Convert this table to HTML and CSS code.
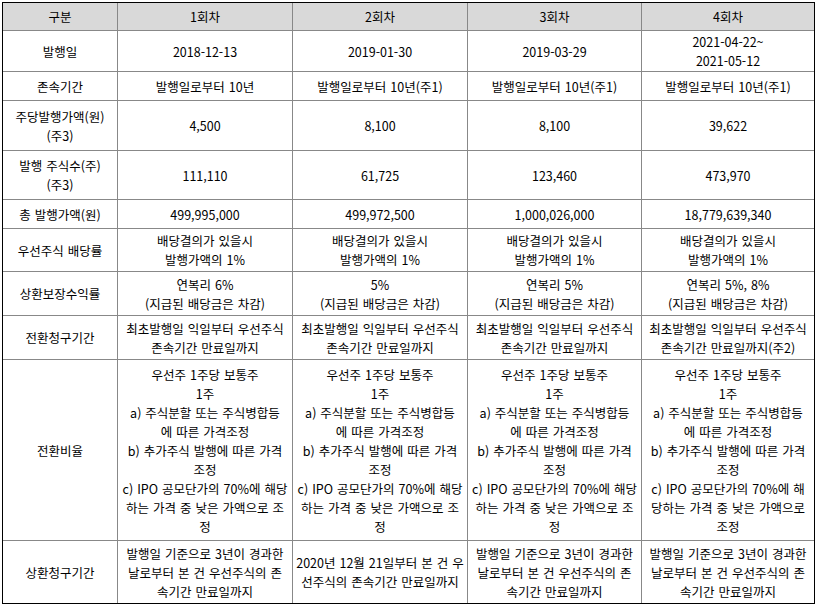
FILE: index.html
```html
<!DOCTYPE html>
<html lang="ko">
<head>
<meta charset="utf-8">
<title>우선주식 발행 내역</title>
<link rel="stylesheet" href="styles.css">
</head>
<body>
<div class="frame">
<table class="grid">
<colgroup>
<col class="c1"><col class="c2"><col class="c3"><col class="c4"><col class="c5">
</colgroup>
<tbody>
<tr class="r-head">
<td>구분</td><td>1회차</td><td>2회차</td><td>3회차</td><td>4회차</td>
</tr>
<tr class="r-date">
<td>발행일</td><td>2018-12-13</td><td>2019-01-30</td><td>2019-03-29</td><td>2021-04-22~<br>2021-05-12</td>
</tr>
<tr class="r-one">
<td>존속기간</td><td>발행일로부터 10년</td><td>발행일로부터 10년(주1)</td><td>발행일로부터 10년(주1)</td><td>발행일로부터 10년(주1)</td>
</tr>
<tr class="r-price">
<td>주당발행가액(원)<br>(주3)</td><td>4,500</td><td>8,100</td><td>8,100</td><td>39,622</td>
</tr>
<tr class="r-shares">
<td>발행 주식수(주)<br>(주3)</td><td>111,110</td><td>61,725</td><td>123,460</td><td>473,970</td>
</tr>
<tr class="r-one">
<td>총 발행가액(원)</td><td>499,995,000</td><td>499,972,500</td><td>1,000,026,000</td><td>18,779,639,340</td>
</tr>
<tr class="r-div">
<td>우선주식 배당률</td>
<td>배당결의가 있을시<br>발행가액의 1%</td>
<td>배당결의가 있을시<br>발행가액의 1%</td>
<td>배당결의가 있을시<br>발행가액의 1%</td>
<td>배당결의가 있을시<br>발행가액의 1%</td>
</tr>
<tr class="r-two">
<td>상환보장수익률</td>
<td>연복리 6%<br>(지급된 배당금은 차감)</td>
<td>5%<br>(지급된 배당금은 차감)</td>
<td>연복리 5%<br>(지급된 배당금은 차감)</td>
<td>연복리 5%, 8%<br>(지급된 배당금은 차감)</td>
</tr>
<tr class="r-two">
<td>전환청구기간</td>
<td>최초발행일 익일부터 우선주식<br>존속기간 만료일까지</td>
<td>최초발행일 익일부터 우선주식<br>존속기간 만료일까지</td>
<td>최초발행일 익일부터 우선주식<br>존속기간 만료일까지</td>
<td>최초발행일 익일부터 우선주식<br>존속기간 만료일까지(주2)</td>
</tr>
<tr class="r-conv">
<td>전환비율</td>
<td>우선주 1주당 보통주<br>1주<br>a) 주식분할 또는 주식병합등<br>에 따른 가격조정<br>b) 추가주식 발행에 따른 가격<br>조정<br>c) IPO 공모단가의 70%에 해당<br>하는 가격 중 낮은 가액으로 조<br>정</td>
<td>우선주 1주당 보통주<br>1주<br>a) 주식분할 또는 주식병합등<br>에 따른 가격조정<br>b) 추가주식 발행에 따른 가격<br>조정<br>c) IPO 공모단가의 70%에 해당<br>하는 가격 중 낮은 가액으로 조<br>정</td>
<td>우선주 1주당 보통주<br>1주<br>a) 주식분할 또는 주식병합등<br>에 따른 가격조정<br>b) 추가주식 발행에 따른 가격<br>조정<br>c) IPO 공모단가의 70%에 해당<br>하는 가격 중 낮은 가액으로 조<br>정</td>
<td>우선주 1주당 보통주<br>1주<br>a) 주식분할 또는 주식병합등<br>에 따른 가격조정<br>b) 추가주식 발행에 따른 가격<br>조정<br>c) IPO 공모단가의 70%에 해<br>당하는 가격 중 낮은 가액으로<br>조정</td>
</tr>
<tr class="r-last">
<td>상환청구기간</td>
<td>발행일 기준으로 3년이 경과한<br>날로부터 본 건 우선주식의 존<br>속기간 만료일까지</td>
<td>2020년 12월 21일부터 본 건 우<br>선주식의 존속기간 만료일까지</td>
<td>발행일 기준으로 3년이 경과한<br>날로부터 본 건 우선주식의 존<br>속기간 만료일까지</td>
<td>발행일 기준으로 3년이 경과한<br>날로부터 본 건 우선주식의 존<br>속기간 만료일까지</td>
</tr>
</tbody>
</table>
</div>
</body>
</html>
```

FILE: styles.css
```css
html, body {
  margin: 0;
  padding: 0;
  background: #ffffff;
}

body {
  padding: 2px 0 0 2px;
  font-family: "Noto Sans CJK KR", "Noto Sans", sans-serif;
  font-size: 12.5px;
  color: #000000;
}

.frame {
  width: 811px;
  border: 1px solid #000000;
}

.grid {
  width: 811px;
  table-layout: fixed;
  border-collapse: separate;
  border-spacing: 0;
}

.c1 { width: 115px; }
.c2 { width: 175px; }
.c3 { width: 175px; }
.c4 { width: 174px; }
.c5 { width: 172px; }

.grid td {
  box-sizing: border-box;
  padding: 0 1px;
  border-right: 1px solid #888888;
  border-bottom: 1px solid #888888;
  text-align: center;
  vertical-align: middle;
  line-height: 19px;
  word-spacing: 0.5px;
  white-space: nowrap;
  overflow: hidden;
}

.grid td:last-child {
  border-right: none;
}

.grid tr:last-child td {
  border-bottom: none;
}

.r-head td {
  background: #d9d9d9;
}

.r-head { height: 28px; }
.r-date { height: 41px; }
.r-one { height: 29px; }
.r-price { height: 50px; }
.r-shares { height: 49px; }
.r-div { height: 43px; }
.r-two { height: 44px; }
.r-conv { height: 181px; }
.r-last { height: 62px; }
```
